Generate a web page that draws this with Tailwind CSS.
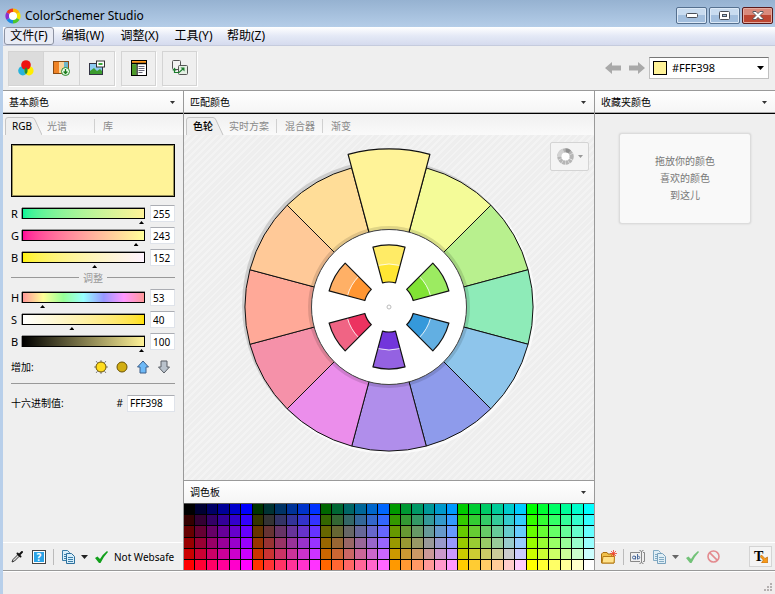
<!DOCTYPE html>
<html lang="zh-CN">
<head>
    <meta charset="UTF-8">
    <meta name="viewport" content="width=device-width, initial-scale=1.0">
    <title>ColorSchemer Studio</title>

    <!-- tailwindcss -->
    <script src="https://cdn.jsdelivr.net/npm/@tailwindcss/browser@4"></script>
</head>
<body class="flex flex-col min-h-screen bg-[#efefef] text-black text-[10px] leading-4 font-['Noto_Sans','Noto_Sans_CJK_SC',sans-serif]">

    <!-- title bar -->
    <header class="flex items-center h-[27px] pl-[5px] pr-[2px] pt-1 bg-linear-to-b from-[#96b2d1] to-[#b4cde8]">
        <svg class="size-4 mr-1" viewBox="0 0 16 16" fill="none" stroke-width="4">
            <path d="M8 2.5A5.5 5.5 0 0 1 12.8 5.2" stroke="#ffb400"/>
            <path d="M12.8 5.2A5.5 5.5 0 0 1 12.8 10.8" stroke="#f2e600"/>
            <path d="M12.8 10.8A5.5 5.5 0 0 1 8 13.5" stroke="#4cc82c"/>
            <path d="M8 13.5A5.5 5.5 0 0 1 3.2 10.8" stroke="#1b8be0"/>
            <path d="M3.2 10.8A5.5 5.5 0 0 1 3.2 5.2" stroke="#8a2fd0"/>
            <path d="M3.2 5.2A5.5 5.5 0 0 1 8 2.5" stroke="#f03a20"/>
            <circle cx="8" cy="8" r="4" fill="#fff"/>
        </svg>
        <h1 class="flex-1 text-[12px]">ColorSchemer Studio</h1>
        <div class="flex gap-[2px]">
            <button aria-label="最小化" class="flex items-center justify-center w-[31px] h-[17px] rounded-[2px] border border-[#55708f] bg-linear-to-b from-[#c9dcf0] from-50% to-[#a3bfde] to-50% shadow-[inset_0_0_0_1px_#dce9f7]">
                <svg class="w-3 h-[5px]" viewBox="0 0 12 5"><rect x=".5" y=".5" width="11" height="4" rx="1" fill="#fff" stroke="#4a4f58"/></svg>
            </button>
            <button aria-label="最大化" class="flex items-center justify-center w-[31px] h-[17px] rounded-[2px] border border-[#55708f] bg-linear-to-b from-[#c9dcf0] from-50% to-[#a3bfde] to-50% shadow-[inset_0_0_0_1px_#dce9f7]">
                <svg class="w-[11px] h-[9px]" viewBox="0 0 11 9"><rect x=".5" y=".5" width="10" height="8" rx="1" fill="#fff" stroke="#4a4f58"/><rect x="3.5" y="3.5" width="4" height="2" fill="#a3bfde" stroke="#4a4f58"/></svg>
            </button>
            <button aria-label="关闭" class="flex items-center justify-center w-[31px] h-[17px] rounded-[2px] border border-[#5a1a1a] bg-linear-to-b from-[#d98a7c] from-50% to-[#bd4632] to-50% shadow-[inset_0_0_0_1px_#e5ab9f]">
                <svg class="w-3 h-[9px]" viewBox="0 0 12 9"><path d="M1 .5H4L6 2.6 8 .5H11V1.5L8 4.5 11 7.5V8.5H8L6 6.4 4 8.5H1V7.5L4 4.5 1 1.5Z" fill="#fff" stroke="#4a4f58" stroke-width=".9"/></svg>
            </button>
        </div>
    </header>

    <div class="flex flex-col flex-1 border-l-3 border-[#b8cfea]">

        <!-- menu -->
        <nav class="flex items-center h-[19px] pl-px text-[12px] bg-linear-to-b from-white via-[#e4e9f6] to-[#d5dbee] border-b border-[#c5cbdd]">
            <button class="h-[18px] w-[50px] rounded-[3px] border border-[#8d93a3] bg-[#e9ecf5] leading-4">文件(F)</button>
            <button class="w-[58px]">编辑(W)</button>
            <button class="w-[55px]">调整(X)</button>
            <button class="w-[53px]">工具(Y)</button>
            <button class="w-[52px]">帮助(Z)</button>
        </nav>

        <!-- toolbar -->
        <div class="flex items-center h-11 pl-[5px] pr-[6px] gap-[6px]">
            <div class="flex w-[107px] h-[35px] border border-[#d4d4d4] divide-x divide-[#d4d4d4] shadow-[1px_1px_0_#fff]">
                <button aria-label="色轮" class="flex flex-1 items-center justify-center bg-[#dcdcdc]">
                    <svg class="size-4" viewBox="0 0 16 16"><circle cx="4.8" cy="10.8" r="4.6" fill="#27b3dc"/><circle cx="11" cy="10.8" r="4.6" fill="#ffee00"/><circle cx="8" cy="5" r="4.8" fill="#ee1111"/><path d="M8 7.3a4.6 4.6 0 0 1 0 7 4.6 4.6 0 0 1 0-7" fill="#1d8a32"/></svg>
                </button>
                <button aria-label="图库" class="flex flex-1 items-center justify-center">
                    <svg class="w-[17px] h-4" viewBox="0 0 17 16"><rect x=".5" y="1.5" width="15" height="12" fill="#f5a95c" stroke="#8a4b12"/><rect x="1" y="2" width="5" height="11" fill="#ef8326"/><rect x="6" y="2" width="5" height="11" fill="#fcd49a"/><rect x="11" y="2" width="4" height="11" fill="#6fb6c8"/><circle cx="12.5" cy="11.5" r="4" fill="#eefaec" stroke="#2b8c2b"/><path d="M12.5 9v4M10.6 11.5l1.9 2 1.9-2" stroke="#1c7d1c" stroke-width="1.3" fill="none"/></svg>
                </button>
                <button aria-label="照片" class="flex flex-1 items-center justify-center">
                    <svg class="size-4" viewBox="0 0 16 16"><rect x=".5" y="3.5" width="13" height="11" fill="#8ecbf2" stroke="#334"/><path d="M1 11l4-3 3 3 3-2 2 2v3H1z" fill="#3c9c2f"/><rect x="7.5" y="1" width="8" height="6" fill="#fff" stroke="#333"/><rect x="9.5" y="3" width="4" height="2" fill="#3aa53a"/></svg>
                </button>
            </div>
            <button aria-label="布局" class="flex items-center justify-center size-[35px] border border-[#d4d4d4] shadow-[1px_1px_0_#fff]">
                <svg class="size-4" viewBox="0 0 16 16"><rect x=".5" y=".5" width="15" height="15" fill="#fff" stroke="#000"/><rect x="1" y="1" width="14" height="2" fill="#ff9a1f"/><path d="M0 3.5h16M6 4v11.5" stroke="#000" stroke-width="1.3"/><rect x="1" y="4.2" width="4.4" height="10.8" fill="#4d9a2a"/><path d="M7.5 6.5h6M7.5 8.5h6M7.5 10.5h6M7.5 12.5h4" stroke="#667"/></svg>
            </button>
            <button aria-label="同步" class="flex items-center justify-center size-[35px] border border-[#d4d4d4] shadow-[1px_1px_0_#fff]">
                <svg class="size-4" viewBox="0 0 16 16"><rect x=".5" y=".5" width="8" height="9" rx="1" fill="#f2f2f2" stroke="#555"/><rect x="6.5" y="5.5" width="9" height="9" rx="1" fill="#e4efe4" stroke="#555"/><path d="M2.5 8.5v4h4.5l4.5-4" fill="none" stroke="#1c7d2c" stroke-width="1.2"/><path d="M8.500 7.500h4v4zM.5 10.500h4l-2-3z" fill="#1c7d2c"/></svg>
            </button>
            <div class="flex-1"></div>
            <div class="flex items-center gap-1">
                <div class="flex gap-[7px]">
                    <button aria-label="后退"><svg class="w-[17px] h-3" viewBox="0 0 17 12"><path d="M0 6l7-6v3.500h9v5H7V12z" fill="#a9a9a9"/></svg></button>
                    <button aria-label="前进"><svg class="w-4 h-3" viewBox="0 0 16 12"><path d="M16 6L9 0v3.500H0v5h9V12z" fill="#a9a9a9"/></svg></button>
                </div>
                <div class="relative flex items-center w-[120px] h-[22px] pl-[3px] bg-white border border-[#c0c0c0] border-t-[#777]">
                    <span class="size-[14px] border border-black bg-[#fff398]"></span>
                    <select aria-label="颜色" class="flex-1 h-full pl-[5px] appearance-none text-[11px] leading-4">
                        <option>#FFF398</option>
                    </select>
                    <svg class="absolute right-1 top-2 w-[7px] h-1 pointer-events-none" viewBox="0 0 7 4"><path d="M0 0h7L3.500 4z"/></svg>
                </div>
            </div>
        </div>

        <main class="flex flex-1 border-t border-b border-[#999]">

            <!-- base color -->
            <section class="flex flex-col w-[181px] border-r border-[#999]">
                <h2 class="flex items-center justify-between h-[23px] pl-[6px] pr-2 border-b border-black bg-linear-to-b from-white to-[#f5f5f5] shadow-[inset_0_-1px_0_#aaa]">
                    基本颜色
                    <svg class="w-[5px] h-[3px]" viewBox="0 0 5 3"><path d="M0 0h5L2.500 3z" fill="#333"/></svg>
                </h2>
                <div class="flex items-end h-[21px] bg-linear-to-b from-[#f0f0f0] to-[#fafafa] text-[#8a8a8a]">
                    <button class="relative w-[39px] h-[18px] text-black text-left pl-[9px]">
                        <svg class="absolute left-0 top-0 w-[39px] h-[18px]" viewBox="0 0 39 18"><path d="M2.500 18V3q0-2.500 2.500-2.500h24Q31 .5 32 3l7 15" fill="#efefef" stroke="#c4c4c4"/></svg>
                        <span class="relative">RGB</span>
                    </button>
                    <button class="w-[53px] pl-[5px] text-left border-r border-[#d0d0d0] leading-[14px] mb-[2px]">光谱</button>
                    <button class="pl-2 leading-[14px] mb-[2px]">库</button>
                </div>

                <div class="flex flex-col px-2 pt-[9px]">
                    <div class="h-[53px] border border-black bg-[#fff398] shadow-[inset_0_0_0_1px_#0006]"></div>

                    <div class="flex flex-col gap-[5px] pt-2">
                        <label class="flex items-center h-[17px]"><span class="w-[11px] text-[11px]">R</span>
                            <input type="range" min="0" max="255" value="255" class="appearance-none w-[123px] h-[11px] border border-black shadow-[0_-1px_0_#999,-1px_0_0_#999] bg-linear-to-r from-[#00f398] to-[#fff398] [&::-webkit-slider-thumb]:appearance-none [&::-webkit-slider-thumb]:w-[5px] [&::-webkit-slider-thumb]:h-[3px] [&::-webkit-slider-thumb]:bg-black [&::-webkit-slider-thumb]:[clip-path:polygon(50%_0,100%_100%,0_100%)] [&::-webkit-slider-thumb]:translate-y-[9px]">
                            <input type="text" aria-label="R" value="255" class="ml-auto w-[25px] h-[17px] pl-[2px] bg-white border border-[#dfe3ea] border-t-[#abadb3]"></label>
                        <label class="flex items-center h-[17px]"><span class="w-[11px] text-[11px]">G</span>
                            <input type="range" min="0" max="255" value="243" class="appearance-none w-[123px] h-[11px] border border-black shadow-[0_-1px_0_#999,-1px_0_0_#999] bg-linear-to-r from-[#ff0098] to-[#ffff98] [&::-webkit-slider-thumb]:appearance-none [&::-webkit-slider-thumb]:w-[5px] [&::-webkit-slider-thumb]:h-[3px] [&::-webkit-slider-thumb]:bg-black [&::-webkit-slider-thumb]:[clip-path:polygon(50%_0,100%_100%,0_100%)] [&::-webkit-slider-thumb]:translate-y-[9px]">
                            <input type="text" aria-label="G" value="243" class="ml-auto w-[25px] h-[17px] pl-[2px] bg-white border border-[#dfe3ea] border-t-[#abadb3]"></label>
                        <label class="flex items-center h-[17px]"><span class="w-[11px] text-[11px]">B</span>
                            <input type="range" min="0" max="255" value="152" class="appearance-none w-[123px] h-[11px] border border-black shadow-[0_-1px_0_#999,-1px_0_0_#999] bg-linear-to-r from-[#fff300] to-[#fff3ff] [&::-webkit-slider-thumb]:appearance-none [&::-webkit-slider-thumb]:w-[5px] [&::-webkit-slider-thumb]:h-[3px] [&::-webkit-slider-thumb]:bg-black [&::-webkit-slider-thumb]:[clip-path:polygon(50%_0,100%_100%,0_100%)] [&::-webkit-slider-thumb]:translate-y-[9px]">
                            <input type="text" aria-label="B" value="152" class="ml-auto w-[25px] h-[17px] pl-[2px] bg-white border border-[#dfe3ea] border-t-[#abadb3]"></label>
                    </div>

                    <div class="flex items-center gap-1 h-[23px] text-[#999]">
                        <span class="flex-1 h-px bg-[#999]"></span>调整<span class="flex-1 h-px bg-[#999]"></span>
                    </div>

                    <div class="flex flex-col gap-[5px]">
                        <label class="flex items-center h-[17px]"><span class="w-[11px] text-[11px]">H</span>
                            <input type="range" min="0" max="360" value="53" class="appearance-none w-[123px] h-[11px] border border-black shadow-[0_-1px_0_#999,-1px_0_0_#999] bg-[linear-gradient(to_right,#ff9898,#ffff98,#98ff98,#98ffff,#9898ff,#ff98ff,#ff9898)] [&::-webkit-slider-thumb]:appearance-none [&::-webkit-slider-thumb]:w-[5px] [&::-webkit-slider-thumb]:h-[3px] [&::-webkit-slider-thumb]:bg-black [&::-webkit-slider-thumb]:[clip-path:polygon(50%_0,100%_100%,0_100%)] [&::-webkit-slider-thumb]:translate-y-[9px]">
                            <input type="text" aria-label="H" value="53" class="ml-auto w-[25px] h-[17px] pl-[2px] bg-white border border-[#dfe3ea] border-t-[#abadb3]"></label>
                        <label class="flex items-center h-[17px]"><span class="w-[11px] text-[11px]">S</span>
                            <input type="range" min="0" max="100" value="40" class="appearance-none w-[123px] h-[11px] border border-black shadow-[0_-1px_0_#999,-1px_0_0_#999] bg-linear-to-r from-white to-[#ffe100] [&::-webkit-slider-thumb]:appearance-none [&::-webkit-slider-thumb]:w-[5px] [&::-webkit-slider-thumb]:h-[3px] [&::-webkit-slider-thumb]:bg-black [&::-webkit-slider-thumb]:[clip-path:polygon(50%_0,100%_100%,0_100%)] [&::-webkit-slider-thumb]:translate-y-[9px]">
                            <input type="text" aria-label="S" value="40" class="ml-auto w-[25px] h-[17px] pl-[2px] bg-white border border-[#dfe3ea] border-t-[#abadb3]"></label>
                        <label class="flex items-center h-[17px]"><span class="w-[11px] text-[11px]">B</span>
                            <input type="range" min="0" max="100" value="100" class="appearance-none w-[123px] h-[11px] border border-black shadow-[0_-1px_0_#999,-1px_0_0_#999] bg-[linear-gradient(to_right,#000,#fff398)] [&::-webkit-slider-thumb]:appearance-none [&::-webkit-slider-thumb]:w-[5px] [&::-webkit-slider-thumb]:h-[3px] [&::-webkit-slider-thumb]:bg-black [&::-webkit-slider-thumb]:[clip-path:polygon(50%_0,100%_100%,0_100%)] [&::-webkit-slider-thumb]:translate-y-[9px]">
                            <input type="text" aria-label="亮度" value="100" class="ml-auto w-[25px] h-[17px] pl-[2px] bg-white border border-[#dfe3ea] border-t-[#abadb3]"></label>
                    </div>

                    <div class="flex items-center gap-[7px] h-[34px] pr-1 border-b border-[#999]">
                        <span class="flex-1">增加:</span>
                        <button aria-label="变亮"><svg class="size-[14px]" viewBox="0 0 14 14"><path d="M7 0v14M0 7h14M2 1l10 12M12 1L2 13" stroke="#777" stroke-width=".9"/><circle cx="7" cy="7" r="5" fill="#ffdc1e" stroke="#6b5200"/></svg></button>
                        <button aria-label="变暗"><svg class="size-[14px]" viewBox="0 0 14 14"><circle cx="7" cy="7" r="5" fill="#d2ae12" stroke="#6b5200"/></svg></button>
                        <button aria-label="增加饱和度"><svg class="size-[14px]" viewBox="0 0 14 14"><path d="M7 1l5.500 6H10v6H4V7H1.500z" fill="#6db9f7" stroke="#3c5f8a"/></svg></button>
                        <button aria-label="降低饱和度"><svg class="size-[14px]" viewBox="0 0 14 14"><path d="M7 13l5.500-6H10V1H4v6H1.500z" fill="#b9c2cc" stroke="#5a5f66"/></svg></button>
                    </div>

                    <label class="flex items-center h-[38px]">
                        <span class="flex-1">十六进制值:</span>
                        <span class="mr-1">#</span>
                        <input type="text" value="FFF398" class="w-12 h-[17px] pl-[2px] bg-white border border-[#dfe3ea] border-t-[#abadb3]">
                    </label>
                </div>

                <div class="flex items-center h-7 mt-auto pl-2 border-t border-white">
                    <button aria-label="吸管"><svg class="size-[13px]" viewBox="0 0 13 13"><path d="M1 12l1-2.500 5-5 1.500 1.500-5 5z" fill="#ddd" stroke="#333"/><path d="M6.500 3.500l3 3M8.500 4.500l2.500-2.500" stroke="#111" stroke-width="2" stroke-linecap="round"/></svg></button>
                    <button aria-label="帮助" class="ml-2 flex items-center justify-center size-[14px] border border-[#444] shadow-[inset_0_0_0_1px_#fff] bg-[#2ba3e6] text-white text-[10px] font-bold leading-3">?</button>
                    <span class="w-px h-4 ml-[7px] mr-2 bg-[#bbb]"></span>
                    <button aria-label="复制" class="flex items-center gap-[6px]">
                        <svg class="w-[13px] h-[14px]" viewBox="0 0 13 14"><path d="M.5.500h5l2 2v8h-7z" fill="#d7eefa" stroke="#3b7ea8"/><path d="M4.500 3.500h5l3 3v7h-8z" fill="#d7eefa" stroke="#2c6f9c"/><path d="M6 7.500h5M6 9.500h5M6 11.500h5M2 4.500h2M2 6.500h2M2 8.500h2" stroke="#3b7ea8"/></svg>
                        <svg class="w-[7px] h-1" viewBox="0 0 7 4"><path d="M0 0h7L3.500 4z" fill="#222"/></svg>
                    </button>
                    <svg class="w-[13px] h-3 ml-[7px] mr-[6px]" viewBox="0 0 13 12"><path d="M0 7l2.500-1.500L5 8Q8 3 12 0l1 1Q9 5 5.500 12H4z" fill="#12a01c"/></svg>
                    Not Websafe
                </div>
            </section>

            <!-- matching colors -->
            <section class="flex flex-col flex-1 border-r border-[#999]">
                <h2 class="flex items-center justify-between h-[23px] pl-[6px] pr-2 border-b border-black bg-linear-to-b from-white to-[#f5f5f5] shadow-[inset_0_-1px_0_#aaa]">
                    匹配颜色
                    <svg class="w-[5px] h-[3px]" viewBox="0 0 5 3"><path d="M0 0h5L2.500 3z" fill="#333"/></svg>
                </h2>
                <div class="flex items-end h-[21px] bg-linear-to-b from-[#f0f0f0] to-[#fafafa] text-[#8a8a8a]">
                    <button class="relative w-10 h-[18px] text-black text-left font-medium pl-[9px]">
                        <svg class="absolute left-0 top-0 w-10 h-[18px]" viewBox="0 0 40 18"><path d="M2.500 18V3q0-2.500 2.500-2.500h24Q31 .5 32 3l7 15" fill="#efefef" stroke="#c4c4c4"/></svg>
                        <span class="relative">色轮</span>
                    </button>
                    <button class="w-[53px] pl-[5px] text-left border-r border-[#d0d0d0] leading-[14px] mb-[2px]">实时方案</button>
                    <button class="w-[46px] pl-2 text-left border-r border-[#d0d0d0] leading-[14px] mb-[2px]">混合器</button>
                    <button class="pl-2 leading-[14px] mb-[2px]">渐变</button>
                </div>

                <div class="relative flex flex-1 items-center justify-center pb-[2px] bg-[repeating-linear-gradient(135deg,#eeeeee_0_3px,#f3f3f3_3px_5px)]">
                    <svg id="wheel" class="w-[330px] h-[330px]" viewBox="-165 -165 330 330" stroke-linejoin="round"></svg>
                    <button aria-label="色轮选项" class="absolute right-[5px] top-[7px] flex items-center justify-center gap-1 w-[39px] h-[29px] rounded-[2px] border border-[#d4d4d4] bg-[#f4f4f4]">
                        <svg class="size-[17px]" viewBox="0 0 17 17" fill="none" stroke-width="4.5">
                            <circle cx="8.5" cy="8.5" r="6" stroke="#b5b5b5" stroke-dasharray="2.7 .44"/>
                            <path d="M8.500 2.500a6 6 0 0 1 4 1.500" stroke="#909090"/>
                            <path d="M2.500 8.500a6 6 0 0 1 4-5.600" stroke="#d2d2d2"/>
                            <circle cx="8.5" cy="8.5" r="4" fill="#fff" stroke="none"/>
                        </svg>
                        <svg class="w-[5px] h-[3px]" viewBox="0 0 5 3"><path d="M0 0h5L2.500 3z" fill="#999"/></svg>
                    </button>
                </div>

                <h2 class="flex items-center justify-between h-6 pl-[6px] pr-2 border-t border-b border-t-[#999] border-b-[#555] bg-linear-to-b from-white to-[#f5f5f5]">
                    调色板
                    <svg class="w-[5px] h-[3px]" viewBox="0 0 5 3"><path d="M0 0h5L2.500 3z" fill="#333"/></svg>
                </h2>
                <div id="palette" class="grid grid-cols-36 grid-rows-6 gap-px h-[66px] bg-black"></div>
            </section>

            <!-- favorites -->
            <section class="flex flex-col w-[180px]">
                <h2 class="flex items-center justify-between h-[23px] pl-[6px] pr-2 border-b border-black bg-linear-to-b from-white to-[#f5f5f5] shadow-[inset_0_-1px_0_#aaa]">
                    收藏夹颜色
                    <svg class="w-[5px] h-[3px]" viewBox="0 0 5 3"><path d="M0 0h5L2.500 3z" fill="#333"/></svg>
                </h2>
                <p class="mx-6 mt-[19px] py-[19px] rounded-[3px] border border-[#dcdcdc] bg-[#f9f9f9] shadow-[0_0_2px_#ccc] text-center leading-[17px] text-[#777]">
                    拖放你的颜色<br>喜欢的颜色<br>到这儿
                </p>
                <div class="flex items-center h-7 mt-auto pl-[6px] pr-[3px] border-t border-white">
                    <button aria-label="新建文件夹"><svg class="w-4 h-[14px]" viewBox="0 0 16 14"><path d="M.5 13V4l1.500-1.500h4l1 1.500h6v9z" fill="#f0c04a" stroke="#a86e10"/><path d="M1 13l1-6.500h11.500L13 13z" fill="#ffe28a" stroke="#b77c15"/><path d="M12.500 0v7M9 3.500h7M10 1l5 5M15 1l-5 5" stroke="#f0402c" stroke-width=".8"/></svg></button>
                    <span class="w-px h-4 mx-[6px] bg-[#bbb]"></span>
                    <button aria-label="重命名"><svg class="w-[15px] h-[14px]" viewBox="0 0 15 14" fill="none"><path d="M10 2.500H.5v9H10M13 2.500h1.500v9H13M9.500.500Q11.500.500 11.500 2v10q0 1.500-2 1.500M13.500.500q-2 0-2 1.500M11.500 12q0 1.500 2 1.500" stroke="#888"/><circle cx="4" cy="7.5" r="1.5" stroke="#4a6a9c"/><path d="M5.500 6v3.500M7.500 4v5.500" stroke="#4a6a9c"/><circle cx="8.5" cy="7.5" r="1.2" stroke="#4a6a9c"/></svg></button>
                    <button aria-label="复制收藏" class="flex items-center gap-[6px] ml-2">
                        <svg class="w-[13px] h-[14px] opacity-60" viewBox="0 0 13 14"><path d="M.5.500h5l2 2v8h-7z" fill="#d7eefa" stroke="#3b7ea8"/><path d="M4.500 3.500h5l3 3v7h-8z" fill="#d7eefa" stroke="#2c6f9c"/><path d="M6 7.500h5M6 9.500h5M6 11.500h5M2 4.500h2M2 6.500h2M2 8.500h2" stroke="#3b7ea8"/></svg>
                        <svg class="w-[7px] h-1" viewBox="0 0 7 4"><path d="M0 0h7L3.500 4z" fill="#666"/></svg>
                    </button>
                    <button aria-label="应用" class="ml-[7px]"><svg class="w-[13px] h-3" viewBox="0 0 13 12"><path d="M0 7l2.500-1.500L5 8Q8 3 12 0l1 1Q9 5 5.500 12H4z" fill="#72c278"/></svg></button>
                    <button aria-label="删除" class="ml-2"><svg class="size-[13px]" viewBox="0 0 13 13" fill="none" stroke="#e38b8f" stroke-width="1.6"><circle cx="6.5" cy="6.5" r="5.5"/><path d="M2.600 2.600l7.800 7.800"/></svg></button>
                    <button aria-label="文字预览" class="relative ml-auto w-[23px] h-[21px] border border-[#d4d4d4] bg-[#f4f4f4] text-left pl-1 font-['Liberation_Serif',serif] font-bold text-[14px] leading-4">T
                        <svg class="absolute right-[3px] bottom-[3px] size-2" viewBox="0 0 8 8"><path d="M0 1.500L1.500 0l3.500 3.500L7.500 2v6h-6L3.300 5z" fill="#f59a1c" stroke="#b86200" stroke-width=".6"/></svg>
                    </button>
                </div>
            </section>
        </main>

        <!-- status bar -->
        <footer class="flex items-end justify-end h-[23px] p-[2px] border-t border-white bg-[#f0eded]">
            <svg class="size-[9px]" viewBox="0 0 9 9" fill="#b5b0b0"><path d="M6 0h2v2H6zM3 3h2v2H3zM6 3h2v2H6zM0 6h2v2H0zM3 6h2v2H3zM6 6h2v2H6z"/></svg>
        </footer>
    </div>
</body>

<script>
    const wheel = document.getElementById('wheel');
    const palette = document.getElementById('palette');

    // clockwise from the top
    const outer = ['#fff398', '#f4fb98', '#b8f08e', '#8eebb8', '#8ec5eb', '#8e9beb', '#b08eeb', '#eb8eeb', '#f591a9', '#ffa998', '#ffc998', '#ffdd98'];
    const inner = [
        ['#ffeb66', '#ffe633'],
        ['#9ceb61', '#81e335'],
        ['#62afe2', '#3599db'],
        ['#9462e2', '#7235db'],
        ['#f06484', '#ec3360'],
        ['#ffb066', '#ff9633']
    ];

    function point(r, deg) {
        const a = (deg - 90) * Math.PI / 180;
        return (r * Math.cos(a)).toFixed(2) + ' ' + (r * Math.sin(a)).toFixed(2);
    }

    function wedge(r1, r2, deg) {
        return `M${point(r1, deg - 15)}L${point(r2, deg - 15)}A${r2} ${r2} 0 0 1 ${point(r2, deg + 15)}L${point(r1, deg + 15)}A${r1} ${r1} 0 0 0 ${point(r1, deg - 15)}Z`;
    }

    function drawWheel() {
        var html = '<circle cx="1" cy="1" r="146" fill="#fafafa"/><circle cx="-2" cy="-2" r="145" fill="#cdcdcd"/>';

        for (var i = 1; i < 12; i++) {
            html += `<path d="${wedge(77, 144, i * 30)}" fill="${outer[i]}" stroke="#111"/>`;
        }
        html += `<path d="${wedge(77, 158, 0)}" fill="${outer[0]}" stroke="#111" stroke-width="1.2"/>`;
        html += '<circle r="79" fill="none" stroke="#000" stroke-opacity=".12" stroke-width="4"/>';
        html += '<circle r="77.5" fill="#fff" stroke="#444"/>';

        inner.forEach((c, i) => {
            html += `<path d="${wedge(43, 62, i * 60)}" fill="${c[0]}"/>`;
            html += `<path d="${wedge(25, 43, i * 60)}" fill="${c[1]}"/>`;
            html += `<path d="M${point(43, i * 60 - 15)}A43 43 0 0 1 ${point(43, i * 60 + 15)}" fill="none" stroke="#fff" stroke-opacity=".8"/>`;
            html += `<path d="${wedge(25, 62, i * 60)}" fill="none" stroke="#111" stroke-width="1.2"/>`;
        });

        html += '<circle r="2" fill="none" stroke="#bbb"/>';
        wheel.innerHTML = html;
    }

    // 216 websafe colors: red per row, green per block, blue per column
    function drawPalette() {
        for (var r = 0; r < 6; r++) {
            for (var c = 0; c < 36; c++) {
                const el = document.createElement('div');
                el.style.backgroundColor = `rgb(${r * 51}, ${Math.floor(c / 6) * 51}, ${(c % 6) * 51})`;
                palette.appendChild(el);
            }
        }
    }

    drawWheel();
    drawPalette();
</script>

</html>
